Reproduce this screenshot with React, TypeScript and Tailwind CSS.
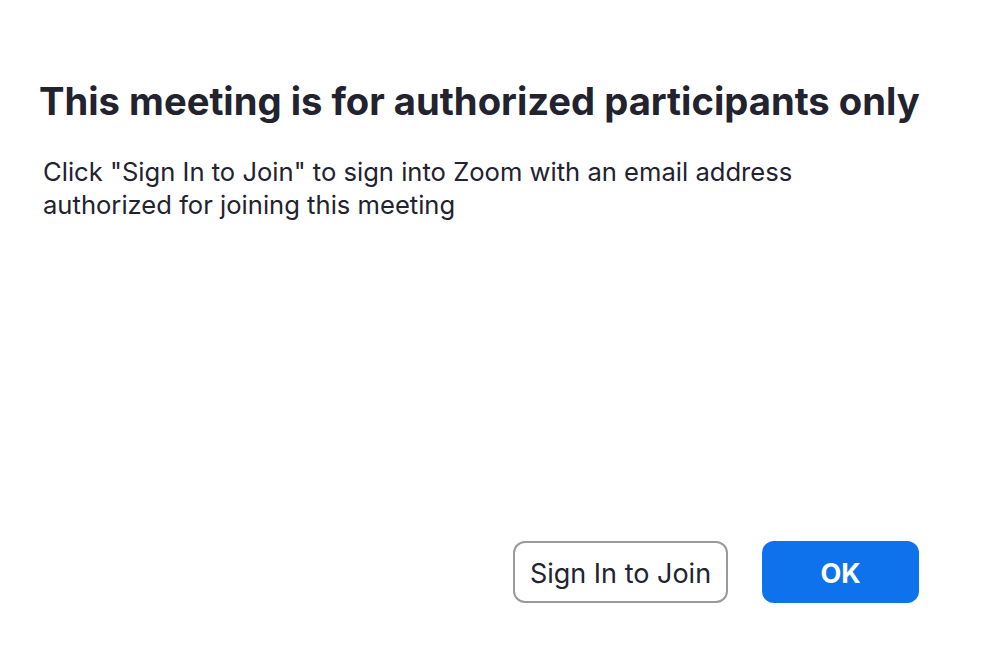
export default function App() {
  return (
    <div
      className="w-[984px] h-[652px] bg-white flex flex-col"
      style={{ fontFamily: "Inter, 'Noto Sans', sans-serif" }}
    >
      <h1 className="mt-[78px] ml-[39px] text-[38.2px] leading-[46px] font-bold text-[#23222f] whitespace-nowrap">
        This meeting is for authorized participants only
      </h1>
      <p className="mt-[31px] ml-[43px] text-[25.6px] leading-[33px] text-[#23222f] whitespace-nowrap">
        Click "Sign In to Join" to sign into Zoom with an email address
        <br />
        authorized for joining this meeting
      </p>
      <div className="mt-auto mb-[49px] mr-[65px] flex justify-end gap-[34px]">
        <button className="h-[62px] w-[215px] pt-[4px] rounded-[12px] border-2 border-[#9a9a9a] bg-white text-[27px] text-[#23222f]">
          Sign In to Join
        </button>
        <button className="h-[62px] w-[157px] pt-[4px] rounded-[12px] bg-[#0e72ed] text-[27px] font-bold text-white">
          OK
        </button>
      </div>
    </div>
  );
}
